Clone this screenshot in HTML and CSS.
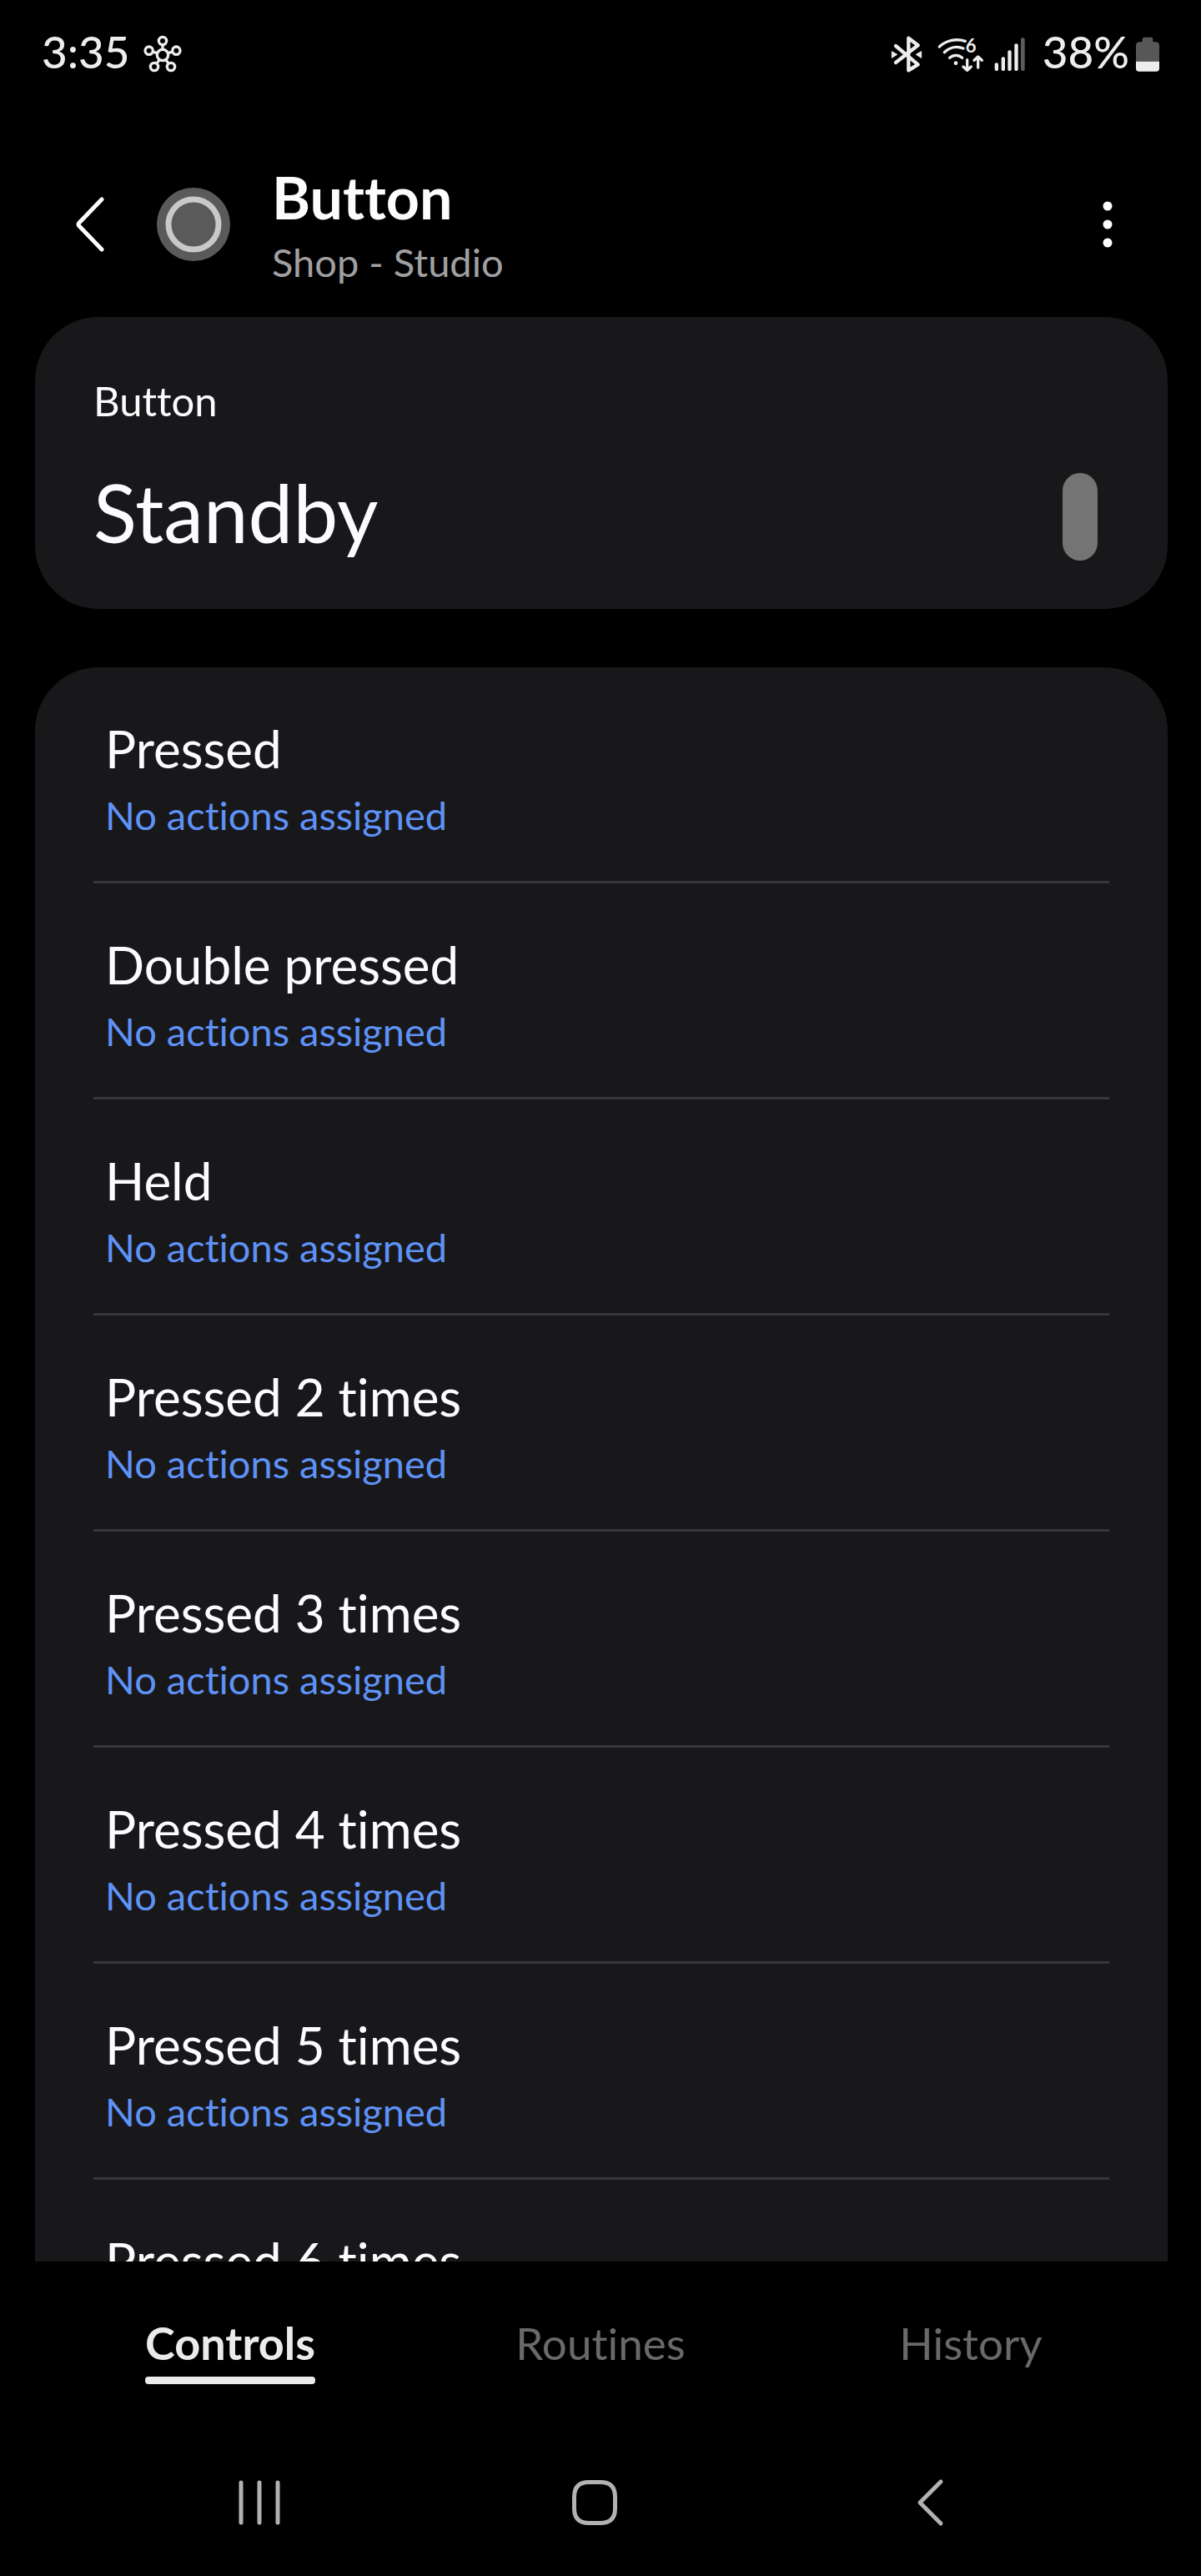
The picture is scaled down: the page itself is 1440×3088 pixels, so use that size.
FILE: index.html
```html
<!DOCTYPE html>
<html lang="en">
<head>
    <meta charset="UTF-8">
    <meta name="viewport" content="width=device-width, initial-scale=1.0">
    <title>Button</title>
    <link rel="stylesheet" href="styles.css">
</head>
<body>
    <div class="status-bar">
        <span class="status-text">3:35</span>
        <svg class="hub-icon" width="46" height="46" viewBox="424 69 138 138" fill="none" stroke="#ededed" stroke-width="10">
            <path d="M493 108V122M474 134L460 130M512 134L526 130M482 157L473 170M504 157L513 170"/>
            <circle cx="493" cy="141" r="20"/>
            <circle cx="493" cy="90" r="14"/>
            <circle cx="542" cy="125" r="14"/>
            <circle cx="523" cy="183" r="14"/>
            <circle cx="463" cy="183" r="14"/>
            <circle cx="444" cy="125" r="14"/>
        </svg>
        <div class="status-right">
            <svg width="38" height="44" viewBox="83 67 114 132">
                <path d="M101 103L181 170L147 191V75L181 101L101 163" fill="none" stroke="#ededed" stroke-width="13" stroke-linecap="round" stroke-linejoin="round"/>
                <path d="M87 123L106 134L87 146ZM193 123L174 134L193 146Z" fill="#ededed" stroke="#ededed" stroke-width="3" stroke-linejoin="round"/>
            </svg>
            <svg class="wifi-icon" width="56" height="44" viewBox="252 67 168 132">
                <g fill="none" stroke="#ededed" stroke-width="10" stroke-linecap="round" stroke-linejoin="round">
                    <path d="M259 106C285 82 320 76 352 86"/>
                    <path d="M277 126C296 108 322 103 345 112"/>
                    <path d="M296 146C309 134 328 134 341 146"/>
                    <path d="M359 153V190M345 178L359 191L373 178"/>
                    <path d="M398 181V143M384 155L398 142L412 155"/>
                </g>
                <circle cx="318" cy="165" r="7" fill="#ededed"/>
                <text class="wifi-label" x="353" y="128">6</text>
            </svg>
            <svg class="signal-icon" width="38" height="44" viewBox="454 67 114 132" fill="#ededed">
                <rect x="456" y="164" width="13" height="29" rx="6"/>
                <rect x="480" y="143" width="13" height="50" rx="6"/>
                <rect x="503" y="119" width="13" height="74" rx="6"/>
                <rect x="527" y="95" width="13" height="98" rx="6"/>
                <rect x="550" y="74" width="14" height="119" rx="6" fill="#5c5c5c"/>
            </svg>
            <span class="status-text">38%</span>
            <svg class="battery-icon" width="28" height="44" viewBox="966 67 84 132">
                <path d="M989 78Q989 72 995 72H1021Q1027 72 1027 78V89H1036Q1050 89 1050 102V159H966V102Q966 89 980 89H989Z" fill="#575757"/>
                <path d="M966 159H1050V184Q1050 195 1039 195H977Q966 195 966 184Z" fill="#ededed"/>
            </svg>
        </div>
    </div>

    <header class="header">
        <button class="icon-btn" aria-label="Back">
            <svg width="38" height="68" viewBox="0 0 38 68" fill="none" stroke="#fff" stroke-width="5" stroke-linecap="round" stroke-linejoin="round">
                <path d="M34 4L7 32Q5 34 7 36L34 64"/>
            </svg>
        </button>
        <svg class="device-icon" width="88" height="88" viewBox="0 0 88 88">
            <circle cx="44" cy="44" r="44" fill="#5a5a5a"/>
            <circle cx="44" cy="44" r="30" fill="none" stroke="#c9c9c9" stroke-width="7"/>
        </svg>
        <div class="header-text">
            <h1>Button</h1>
            <p>Shop - Studio</p>
        </div>
        <button class="icon-btn" aria-label="More options">
            <svg width="12" height="56" viewBox="0 0 12 56" fill="#fff">
                <circle cx="6" cy="6" r="5.5"/>
                <circle cx="6" cy="28" r="5.5"/>
                <circle cx="6" cy="50" r="5.5"/>
            </svg>
        </button>
    </header>

    <main class="content">
        <section class="card state-card">
            <h2>Button</h2>
            <div class="state-row">
                <span class="state">Standby</span>
                <span class="state-pill"></span>
            </div>
        </section>

        <ul class="card action-list">
            <li><button class="action"><span class="action-name">Pressed</span><span class="action-info">No actions assigned</span></button></li>
            <li><button class="action"><span class="action-name">Double pressed</span><span class="action-info">No actions assigned</span></button></li>
            <li><button class="action"><span class="action-name">Held</span><span class="action-info">No actions assigned</span></button></li>
            <li><button class="action"><span class="action-name">Pressed 2 times</span><span class="action-info">No actions assigned</span></button></li>
            <li><button class="action"><span class="action-name">Pressed 3 times</span><span class="action-info">No actions assigned</span></button></li>
            <li><button class="action"><span class="action-name">Pressed 4 times</span><span class="action-info">No actions assigned</span></button></li>
            <li><button class="action"><span class="action-name">Pressed 5 times</span><span class="action-info">No actions assigned</span></button></li>
            <li><button class="action"><span class="action-name">Pressed 6 times</span></button></li>
        </ul>
    </main>

    <nav class="tabs">
        <button class="tab active">Controls</button>
        <button class="tab">Routines</button>
        <button class="tab">History</button>
    </nav>

    <div class="system-nav">
        <button class="icon-btn" aria-label="Recent apps">
            <svg width="56" height="56" viewBox="0 0 56 56" stroke="#b2b2b2" stroke-width="5" stroke-linecap="round">
                <path d="M6 4V52M28 4V52M50 4V52"/>
            </svg>
        </button>
        <button class="icon-btn" aria-label="Home">
            <svg width="56" height="56" viewBox="0 0 56 56" fill="none" stroke="#b2b2b2" stroke-width="5">
                <path d="M21 3.500H35Q52.500 3.500 52.500 21V35Q52.500 52.500 35 52.500H21Q3.500 52.500 3.500 35V21Q3.500 3.500 21 3.500Z"/>
            </svg>
        </button>
        <button class="icon-btn" aria-label="Back">
            <svg width="34" height="56" viewBox="0 0 34 56" fill="none" stroke="#b2b2b2" stroke-width="5" stroke-linecap="round" stroke-linejoin="round">
                <path d="M30 3L5 28L30 53"/>
            </svg>
        </button>
    </div>
</body>
</html>
```
FILE: styles.css
```css
* {
    box-sizing: border-box;
}
body {
    font-family: Lato, 'Open Sans', sans-serif;
    font-variant-ligatures: none;
    color: #fcfcfe;
    background-color: #000;
    margin: 0;
    height: 100vh;
    display: flex;
    flex-direction: column;
}
h1, h2, p, ul {
    margin: 0;
    padding: 0;
}
button {
    font-family: inherit;
    font-variant-ligatures: none;
    color: inherit;
    background: none;
    border: none;
    padding: 0;
    cursor: pointer;
}
svg {
    display: block;
    flex-shrink: 0;
    overflow: visible;
}
.icon-btn {
    display: flex;
    align-items: center;
    justify-content: center;
}

/* Status bar */
.status-bar {
    display: flex;
    align-items: center;
    padding: 30px 50px 0;
}
.status-text {
    font-size: 53px;
    line-height: 64px;
    font-weight: 500;
    color: #ededed;
}
.hub-icon {
    margin: 6px 0 0 16px;
}
.status-right {
    display: flex;
    align-items: center;
    margin-left: auto;
}
.wifi-icon {
    margin-left: 18px;
}
.signal-icon {
    margin: 0 20px 0 12px;
}
.battery-icon {
    margin-left: 8px;
}
.status-right svg {
    margin-top: 6px;
}
.wifi-label {
    font-size: 66px;
    font-weight: 700;
    fill: #ededed;
}

/* Header */
.header {
    display: flex;
    align-items: center;
    padding: 102px 106px 38px 88px;
}
.device-icon {
    margin: 0 50px 0 62px;
}
.header-text {
    flex: 1;
}
.header h1 {
    font-size: 70px;
    line-height: 80px;
    font-weight: 700;
}
.header p {
    margin-top: 10px;
    font-size: 47px;
    line-height: 56px;
    color: #a0a0a2;
}

/* Cards */
.content {
    flex: 1;
    min-height: 0;
    overflow: hidden;
    padding: 0 40px 0 42px;
}
.card {
    background-color: #18181a;
    border-radius: 76px;
}
.state-card {
    padding: 72px 84px 58px 70px;
    margin-bottom: 70px;
}
.state-card h2 {
    font-size: 49px;
    line-height: 56px;
    font-weight: 400;
}
.state-row {
    display: flex;
    align-items: flex-end;
    justify-content: space-between;
    margin-top: 48px;
}
.state {
    font-size: 96px;
    line-height: 116px;
}
.state-pill {
    width: 42px;
    height: 105px;
    border-radius: 21px;
    background-color: #747474;
}
.action-list {
    list-style: none;
    padding: 0 70px;
}
.action-list li {
    border-bottom: 3px solid #37373a;
}
.action {
    display: block;
    width: 100%;
    padding: 61px 14px 51px;
    text-align: left;
}
.action-name {
    display: block;
    font-size: 62px;
    line-height: 72px;
}
.action-info {
    display: block;
    margin-top: 16px;
    font-size: 47px;
    line-height: 56px;
    color: #5f92f7;
}

/* Bottom tabs */
.tabs {
    display: grid;
    grid-template-columns: repeat(3, 1fr);
    justify-items: center;
    padding: 66px 54px 0;
}
.tab {
    font-size: 53px;
    line-height: 64px;
    color: #69696b;
}
.tab::after {
    content: "";
    display: block;
    height: 9px;
    margin-top: 8px;
    border-radius: 4px;
}
.tab.active {
    font-size: 54px;
    font-weight: 700;
    color: #ebebeb;
}
.tab.active::after {
    background-color: #ebebeb;
}

/* System navigation */
.system-nav {
    display: grid;
    grid-template-columns: repeat(3, 1fr);
    padding: 114px 124px 60px 110px;
}
```
